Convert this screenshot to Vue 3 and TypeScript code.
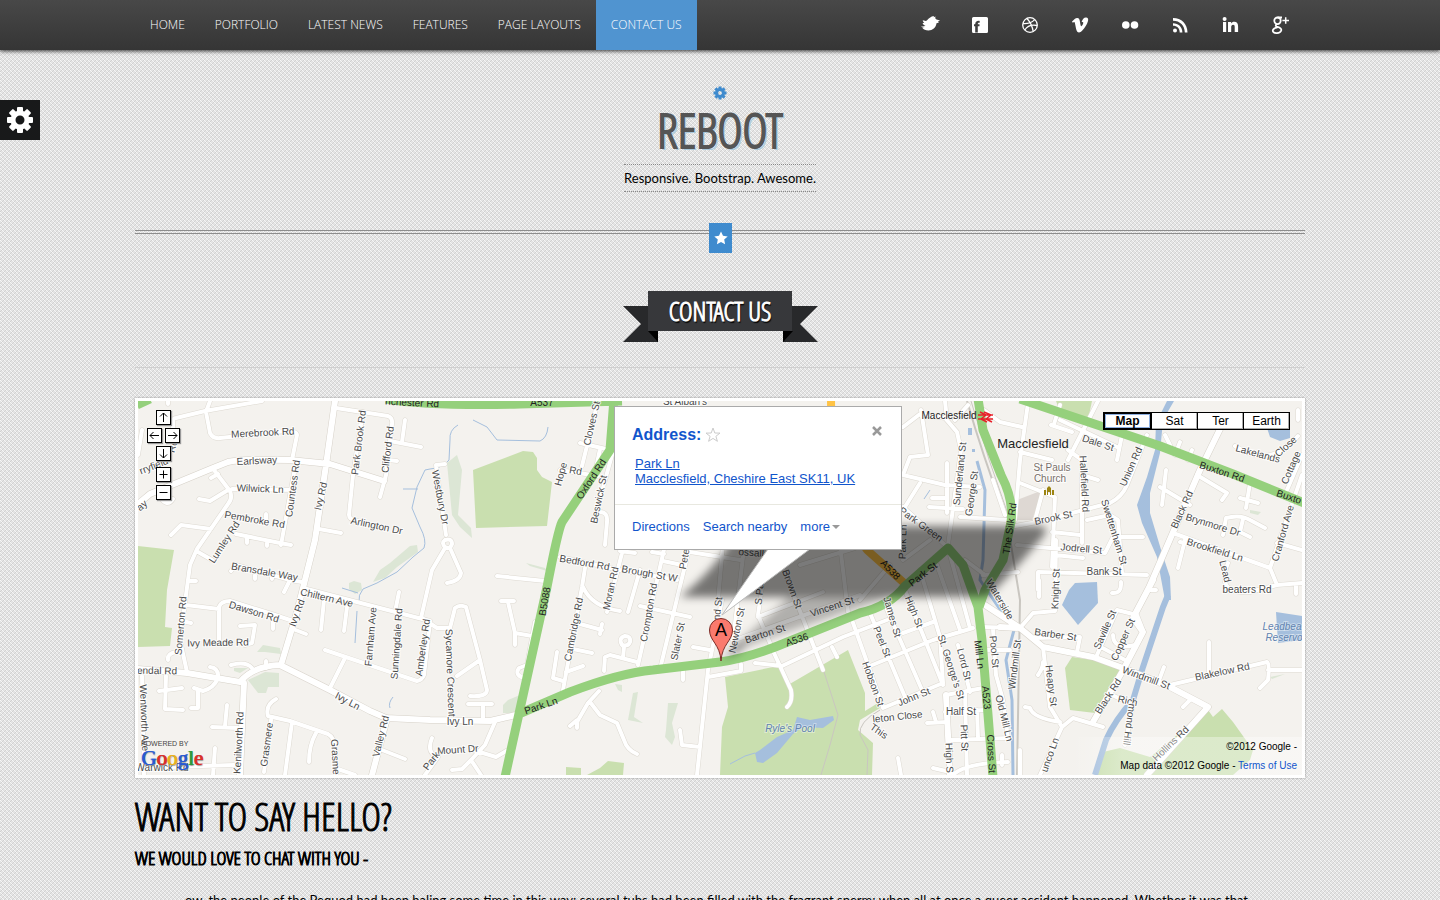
<script setup lang="ts">
interface Label {
  t: string
  x: number
  y: number
  r: number
}

const nav = ['Home', 'Portfolio', 'Latest News', 'Features', 'Page Layouts', 'Contact Us']
const mapTypes = ['Map', 'Sat', 'Ter', 'Earth']

const social = [
  { name: 'Twitter', d: 'M1 11.500c2 .3 3.500 0 4.500-.7C3.500 10 2.800 9 2.600 8l1.700-.1C3.200 7 2.800 6 2.800 5.200L6 6C7 5.500 8 4 9.500 3 11 1.800 12.500 1 14 1l-.4 1.200L15.500 1.500l-.3 1.800 1.300 1.200 3.700 1-2.400 1.200 1.200.8-2.500.8C16 12.500 12.500 15.500 8.500 15.500c-3 0-5-1-6-2.500l2.500-.2C3.200 12.800 1.800 12.400 1 11.500z' },
  { name: 'Facebook', d: 'M3.500 2h13A1.500 1.500 0 0 1 18 3.500v13a1.500 1.500 0 0 1-1.500 1.500h-13A1.500 1.500 0 0 1 2 16.500v-13A1.500 1.500 0 0 1 3.500 2zM5.200 17.500h2.600v-6.300h1.700V9.300H7.800c0-1.200.3-1.700 1.900-1.500V5.900C6.700 5.500 5.200 6.800 5.200 9.300H4v1.900h1.200z' },
  { name: 'Dribbble', d: '' },
  { name: 'Vimeo', d: 'M2 6.500C4 4.500 5.500 3.200 7 3c2-.2 2.600 1.300 3 4 .5 3 .8 4.300 1.300 4.300.6 0 2-2.300 2-3.500 0-1-.8-1-1.700-.7C12.500 4 14 2.300 16.200 2.500c3 .2 2 3.800.8 6.300-2 4-5.500 8.700-8 8.700-2.300 0-2.800-3-3.500-6.500C5 8.500 4.800 7 4.200 7c-.4 0-.8.300-1.400.7z' },
  { name: 'Flickr', d: 'M5.800 6.200a3.800 3.800 0 1 1 0 7.600 3.800 3.800 0 0 1 0-7.600zM14.500 6.200a3.800 3.800 0 1 1 0 7.600 3.800 3.800 0 0 1 0-7.600z' },
  { name: 'RSS', d: 'M5 13.500a2 2 0 1 1 0 4 2 2 0 0 1 0-4zM3 8.200v2.600c4 0 6.700 2.700 6.700 6.700h2.700C12.400 12 8.500 8.200 3 8.200zM3 3v2.700c7 0 11.800 4.800 11.800 11.800h2.700C17.500 9 11.500 3 3 3z' },
  { name: 'LinkedIn', d: 'M3 7h3.200v10H3zM4.600 2a2 2 0 1 1 0 4 2 2 0 0 1 0-4zM8 7h3.100v1.400c.7-1.100 1.700-1.700 3.100-1.700 2.800 0 3.900 1.600 3.900 4.700V17h-3.400v-5c0-1.500-.4-2.300-1.600-2.300-1.300 0-1.900.9-1.900 2.400V17H8z' },
  { name: 'Google Plus', d: '' },
]

const parks = [
  '138,546 174,550 167,590 165,627 172,628 170,646 138,647',
  '473,470 523,451 533,452 537,458 537,470 542,477 552,482 547,526 476,528',
  '725,677 773,667 780,668 788,685 848,650 865,693 865,711 878,703 880,708 860,720 858,730 873,743 872,775 720,775 722,727 728,707',
  '566,767 581,768 581,775 566,775',
  '587,775 600,768 608,761 624,763 623,775',
  '1056,401 1092,401 1088,420 1060,412',
  '1065,668 1072,657 1093,660 1120,670 1095,713 1070,710',
  '1103,752 1120,748 1150,757 1187,727 1208,710 1213,717 1222,709 1233,722 1253,750 1250,760 1233,775 1095,775',
]
const woods = [
  '380,570 390,563 410,546 417,545 418,552 397,567 385,578 373,582',
  '349,583 354,581 361,583 362,590 355,594 349,589',
  '257,652 263,645 280,648 281,654 265,652',
  '234,668 248,668 240,673 234,671',
  '248,680 265,672 279,673 279,687 268,687 266,693 258,693',
  '447,463 457,455 462,470 458,515 471,528 472,538 460,527 452,515',
  '503,705 508,700 520,695 520,713 503,713',
  '668,703 678,703 672,723 675,737 672,745 665,737 666,730',
  '633,693 638,692 634,717 643,723 628,720',
  '615,684 622,685 622,692 618,690',
  '526,563 545,568 547,571 530,566',
  '1270,677 1285,674 1272,679',
  '1250,510 1261,512 1258,515 1250,513',
]
const waters = [
  '755,753 760,750 777,737 793,730 797,717 810,720 833,716 834,720 823,728 803,727 793,734 777,753 763,763 757,762',
  '1167,401 1174,401 1163,420 1160,453 1150,493 1150,513 1162,553 1170,577 1171,600 1165,600 1157,557 1142,523 1137,505 1147,477 1155,450 1156,423',
  '1267,428 1290,428 1290,438 1280,441 1270,437',
  '1069,590 1075,583 1097,582 1098,603 1078,625 1062,605',
  '1276,612 1302,616 1302,640 1278,643',
  '968,428 972,428 972,435 968,435',
  '972,449 975,449 975,452 972,452',
]

const minor = `
M173,430 V420 Q174,418 176,418 L205,411 L262,401 M210,401 L206,412 L210,433 Q213,439 220,438 L286,431 Q297,431 297,435 L292,460
M336,408 L388,416 Q393,418 392,424 L386,475 L380,497 M405,420 L402,442 M390,441 L421,447 M388,460 L397,461
M363,412 L353,475 L349,515 Q349,520 358,521 M232,489 L292,490 M214,470 L230,491 Q233,498 228,504 L197,549 L190,565 L180,640 L187,672
M228,490 L210,501 L199,499 M218,474 L211,478 M211,529 L181,525 L171,535 M296,462 L281,545 M236,534 L280,543 L291,545 M247,537 V543 M267,541 V546 M266,514 V522
M198,552 L212,560 M319,529 L341,533 M189,581 H196 M284,592 L290,580 L302,582 M231,571 L236,565 L290,580 M255,575 V579 M272,575 V579 M160,497 Q167,508 173,499
M303,588 L430,621 M324,600 L321,630 M347,607 L344,631 M399,592 L396,607 M325,650 L417,681 Q422,680 424,675 L430,622
M345,658 L330,688 M138,455 L142,430 M168,401 V404
M186,605 L219,609 M219,640 L219,607 Q221,601 230,601 L275,615 L293,621 M240,626 L255,625 L252,643 L245,645 M273,618 V629 M293,629 L306,634 M182,621 L191,623
M168,660 Q167,653 177,652 M210,667 Q219,668 218,678 Q214,688 203,691 L194,688 M198,690 L198,708 L191,708 M231,665 Q246,661 252,668 M266,661 V668
M166,676 L165,709 L183,710 M159,691 L182,688 M212,727 L238,728 M227,705 L225,726
M276,699 Q265,705 268,716 L290,721 L328,734 Q336,738 335,755 L336,775 M292,722 L285,775 M316,733 Q309,745 309,762 M271,720 L264,772
M382,750 L405,759 M142,676 L144,775 M138,768 L234,765 M215,748 L213,775 M335,768 L355,775
M445,464 L436,465 L437,473 L446,535 M445,548 L432,570 L421,618 M450,548 L461,573 Q460,581 447,583
M598,401 L582,466 M580,443 L606,449 M600,449 L594,478 M560,470 L598,476 M614,448 L594,520 M600,512 Q608,512 607,522 L605,545
M560,557 L620,570 L677,580 M622,553 L607,612 M620,551 L635,553 M585,568 L582,587 L563,690 M583,587 Q592,607 620,611 M497,576 L545,581
M640,570 L628,612 M665,545 L638,665 M690,545 L661,665 M652,552 L664,554 M663,561 L682,565
M501,601 H514 M508,602 L515,633 L532,636 M515,633 V645 M535,622 L527,665 L519,668 Q514,675 524,678
M422,618 L437,628 L450,628 L455,608 Q460,604 466,607 L480,660 L487,690 Q487,697 470,696 M480,660 L457,676 M468,704 H492 M483,704 V721
M495,722 L485,745 L471,760 L481,775 M471,760 L462,769 L452,770 M473,750 L496,757 L508,750 M432,738 Q427,750 434,755 M438,757 L425,775
M580,624 L602,630 M602,624 L600,634 M573,649 L592,653 M566,672 L583,666 M557,652 L553,678 L563,681
M604,671 L605,657 L610,655 L637,662 M624,647 L623,658 M640,606 L690,617 M693,647 L710,650 M683,671 V680
M599,691 L588,703 L577,722 V728 M577,720 L570,726 M590,702 L600,715 L617,723 L624,740 Q627,750 637,754
M722,600 L708,670 L697,775 M680,730 L682,745 L700,747 M708,677 L741,671 V664 M745,540 L733,640 M690,552 L740,560 M723,545 L718,600
M780,560 L823,670 M758,617 L823,592 M768,545 L758,615 L773,650 M735,640 L860,595 M852,620 L883,707 M870,613 L905,697 M885,605 L922,690 M905,590 L943,685
M920,570 L940,637 M937,565 L960,630 M950,555 L970,628 M840,545 L848,612 M800,565 L855,548 M860,600 L890,565 M755,663 L782,666 L843,637 L887,620 M865,668 L933,640 L973,628 M903,633 L933,622 M883,708 L943,683
M774,653 L791,690 Q793,702 787,707 M832,647 L837,657 M940,637 L943,683 M946,695 L983,688 M958,645 L970,692 M927,723 L948,722 M933,712 L936,722 M950,740 L1010,738 M945,712 L985,710
M965,693 L967,775 M953,775 Q965,763 1008,762 M898,758 L901,775 M933,768 L950,772 M977,710 L978,738 M982,627 L1020,628 M993,629 L996,675 L1003,700 L1008,738 M985,650 H1000
M903,427 L920,414 L945,418 L957,432 L961,450 L948,545 M945,401 L947,420 M955,420 L968,405 M921,410 L928,455 L910,457 L903,475 L945,485 L980,487 M920,483 L903,510 M947,463 V513 M932,498 H945 M929,507 L963,509 M960,517 L1007,520 M903,507 L945,545
M984,410 L1000,422 L1022,427 M993,480 L1005,515 M903,560 L930,540 M983,575 L1018,572 M965,560 L985,575
M1028,403 L1020,460 L1015,520 M1020,483 L1055,497 L1052,567 M1052,460 L1020,452 M1098,401 L1068,460 M1068,450 L1082,460 V543 M1051,425 L1072,432 M1060,405 L1054,424 M1043,490 L1035,520
M1010,527 L1037,522 L1072,513 L1110,503 Q1122,497 1127,485 L1147,435 M1082,475 L1098,480 M1052,532 L1080,535 M1017,545 L1105,553 L1113,537 H1143 M1087,520 L1110,515 L1118,520 L1122,573
M1038,572 L1147,575 M1038,572 V590 M1055,555 L1083,558 M1060,420 L1117,447 M1125,420 L1117,460
M1166,470 L1162,505 M1160,487 L1190,505 M1165,435 L1170,445 M1180,442 L1175,455 M1192,450 L1188,460 M1197,475 L1227,493 L1222,500 M1250,483 L1246,508 M1240,498 L1258,503 M1223,535 L1226,518 Q1240,514 1250,520 L1265,528 M1243,519 L1240,532 L1250,537
M1173,533 L1270,568 L1302,475 M1270,568 L1277,585 L1302,583 M1277,543 L1302,550 M1185,540 L1178,568 M1180,542 L1195,545 M1287,490 L1302,455 M1235,446 Q1270,470 1298,436 M1228,563 Q1215,595 1250,592 L1277,585 M1296,585 V594 M1298,410 V420
M1020,628 L1033,613 L1055,611 L1056,540 M1039,580 V597 M1097,655 L1117,610 L1137,615 L1143,630 M1113,635 Q1113,650 1135,645 M1097,645 L1125,660 M1033,638 L1080,637 L1077,652 M1112,593 Q1122,594 1121,582
M1170,685 L1267,662 Q1270,664 1268,680 L1260,688 M1268,670 H1302 M1209,642 V672 M1164,667 L1158,683 M1190,700 L1183,707
M1043,647 L1050,707 L1062,727 L1040,775 M1025,707 L1030,708 Q1033,718 1060,722 M1062,727 L1073,718 L1103,727 M1112,695 L1133,705 L1125,745 M1043,662 Q1043,668 1038,675 M1150,590 H1156 M1000,650 H1010 M1002,765 V755 M1020,750 V775
M445,540 Q452,538 452,544 Q450,550 445,547 Q441,543 445,540 M625,636 Q631,636 630,642 Q628,647 622,645 Q618,638 625,636`

const major = `
M138,504 L150,494 L213,468 L228,462 Q240,459 290,460 L330,464 L384,481
M335,401 L326,465 L315,540 L303,588 L297,612 L281,665
M138,669 L187,673 L240,682 Q253,666 280,665 L330,690 L370,711 L386,718 L430,720 L490,721 L520,714 M244,683 L240,775 M387,718 L372,775
M1222,425 L1200,470 L1148,590 M1153,580 L1133,618 L1143,632 L1122,672 L1093,722
M1000,627 L1020,628 L1043,647 L1093,657 L1123,668 L1170,687 L1208,707 L1147,775 M985,605 L1020,628 M946,695 L950,775`

const labels: Label[] = [
  ['Merebrook Rd', 263, 436, -3], ['Earlsway', 257, 464, -3], ['Wilwick Ln', 260, 492, 2], ['Countess Rd', 296, 489, -82],
  ['Ivy Rd', 324, 497, -77], ['Park Brook Rd', 362, 443, -83], ['Clifford Rd', 391, 450, -83], ['Arlington Dr', 376, 529, 12],
  ['Pembroke Rd', 254, 523, 10], ['Lumley Rd', 227, 544, -57], ['Bransdale Way', 264, 575, 10], ['rryfield', 155, 469, -22],
  ['Rd', 176, 447, -75], ['ay', 144, 508, -40], ['Somerton Rd', 184, 626, -85], ['Dawson Rd', 253, 615, 17], ['Ivy Rd', 300, 614, -70],
  ['Ivy Meade Rd', 218, 646, -1], ['endal Rd', 157, 674, 1], ['Wentworth Ave', 141, 718, 88], ['Kenilworth Rd', 242, 743, -87],
  ['Grasmere', 270, 745, -82], ['Grasme', 332, 757, 87], ['Ivy Ln', 346, 704, 28], ['Valley Rd', 384, 737, -76],
  ['Warwick Rd', 162, 771, 0], ['Chiltern Ave', 326, 601, 13], ['Farnham Ave', 374, 637, -85], ['Sunningdale Rd', 400, 644, -86],
  ['Amberley Rd', 426, 648, -82], ['Sycamore Crescent', 447, 673, 88], ['Ivy Ln', 460, 725, 0], ['Mount Dr', 458, 753, -4],
  ['Park', 434, 763, -52], ['Westbury Dr', 437, 498, 79], ['Clowes St', 595, 424, -77], ['Hope', 564, 475, -75], ['Rd', 575, 474, 10],
  ['Beswick St', 602, 500, -78], ['Bedford Rd', 584, 566, 10], ['Brough St W', 649, 577, 10], ['Moran Rd', 614, 589, -78],
  ['Crompton Rd', 652, 613, -80], ['Cambridge Rd', 577, 630, -79], ['Slater St', 681, 642, -79], ['Peter St', 689, 552, -80],
  ['nd St', 721, 609, -84], ['Newton St', 740, 631, -78], ['S Park', 763, 590, -84], ['Brown St', 789, 590, 70],
  ['Vincent St', 833, 610, -18], ['Barton St', 766, 637, -18], ['Peel St', 879, 643, 68], ['Hobson St', 870, 685, 70],
  ['James St', 889, 618, 74], ['High St', 911, 613, 68], ["St. George's St", 948, 668, 72], ['Lord St', 961, 665, 76],
  ['Pool St', 991, 652, 85], ['John St', 915, 700, -22], ['Half St', 961, 715, 0], ['Pitt St', 961, 738, 88], ['High S', 946, 758, 88],
  ['Old Mill Ln', 1001, 719, 76], ['leton Close', 898, 720, -6], ['This', 877, 734, 35], ['Sunderland St', 963, 474, -84],
  ['George St', 975, 494, -82], ['Park Green', 919, 527, 36], ['Park Ln', 906, 542, -88], ['Waterside', 997, 601, 60],
  ['Hallefield Rd', 1081, 484, 87], ['Union Rd', 1134, 468, -66], ['Dale St', 1097, 446, 18], ['Brook St', 1054, 521, -12],
  ['Swettenham St', 1111, 533, 73], ['Jodrell St', 1081, 552, 5], ['Bank St', 1104, 575, 0], ['Knight St', 1059, 589, -88],
  ['Barber St', 1055, 638, 8], ['Black Rd', 1185, 511, -66], ['Lakelands', 1257, 457, 15], ['Close', 1288, 449, -42],
  ['Cottage', 1294, 469, -66], ['Brynmore Dr', 1212, 528, 17], ['Brookfield Ln', 1214, 553, 17], ['Cranford Ave', 1286, 534, -74],
  ['Lead', 1222, 572, 76], ['beaters Rd', 1247, 593, 0], ['Saville St', 1108, 631, -66], ['Copper St', 1126, 641, -66],
  ['Windmill St', 1145, 681, 20], ['Blakelow Rd', 1223, 675, -12], ['Black Rd', 1111, 698, -57], ['Heapy St', 1048, 686, 83],
  ['Windmill St', 1018, 665, -83], ['Rich', 1127, 704, 12], ['mond Hill', 1126, 724, 98], ['Hollins Rd', 1173, 746, -44],
  ['unco Ln', 1053, 756, -70], ["St Alban's", 685, 405, 0], ['ossall', 751, 556, 4],
].map(([t, x, y, r]) => ({ t, x, y, r }) as Label)

const strong: Label[] = [
  { t: 'A537', x: 542, y: 406, r: 0 }, { t: 'nchester Rd', x: 412, y: 406, r: 3 },
  { t: 'Oxford Rd', x: 594, y: 481, r: -57 }, { t: 'B5088', x: 548, y: 602, r: -80 },
  { t: 'Park Ln', x: 542, y: 709, r: -19 }, { t: 'A536', x: 798, y: 643, r: -18 },
  { t: 'Park St', x: 925, y: 577, r: -38 }, { t: 'A538', x: 888, y: 572, r: 46 },
  { t: 'The Silk Rd', x: 1013, y: 529, r: -82 }, { t: 'Mill Ln', x: 976, y: 655, r: 83 },
  { t: 'A523', x: 983, y: 698, r: 85 }, { t: 'Cross St', x: 988, y: 754, r: 87 },
  { t: 'Buxton Rd', x: 1221, y: 475, r: 18 }, { t: 'Buxto', x: 1288, y: 500, r: 18 },
]
</script>

<template>
  <div class="page">
    <header class="bar">
      <div class="wrap bar-in">
        <nav class="nav">
          <a v-for="n in nav" :key="n" href="#" :class="{ on: n === 'Contact Us' }">{{ n }}</a>
        </nav>
        <div class="social">
          <a v-for="s in social" :key="s.name" href="#" :aria-label="s.name">
            <svg viewBox="0 0 20 20" width="20" height="20">
              <g v-if="s.name === 'Dribbble'" fill="none" stroke="#fff" stroke-width="1.300">
                <circle cx="10" cy="10" r="7.300" />
                <path d="M7 3.500Q12 9 13.200 16.500M3 8.600Q10.500 9 14.800 4.600M4.800 15Q8.500 8.800 17.200 10.500" />
              </g>
              <g v-else-if="s.name === 'Google Plus'" fill="none" stroke="#fff" stroke-width="1.800">
                <ellipse cx="7.500" cy="5.800" rx="3.200" ry="3.300" />
                <path d="M7.500 2.500h4.500M7.500 9Q4.500 10.300 6.500 11.600Q11.800 12.800 11.300 15.300Q10.300 18.300 6.500 18.100Q2.500 17.800 2.800 15.300Q3.600 12.900 7.500 12.400" />
                <path d="M15.700 2.200v6.600M12.400 5.500h6.600" stroke-width="1.500" />
              </g>
              <path v-else :d="s.d" fill="#fff" fill-rule="evenodd" />
            </svg>
          </a>
        </div>
      </div>
    </header>

    <button class="settings" type="button" aria-label="Settings">
      <svg viewBox="-14 -14 28 28" width="28" height="28">
        <g fill="#fff">
          <rect v-for="a in 8" :key="a" x="-3" y="-13" width="6" height="8" rx="1" :transform="`rotate(${a * 45})`" />
        </g>
        <circle r="7" fill="none" stroke="#fff" stroke-width="5" />
      </svg>
    </button>

    <main class="wrap">
      <section class="brand">
        <svg class="cog" viewBox="-7 -7 14 14" width="14" height="14">
          <g fill="#3f8bce">
            <rect v-for="a in 8" :key="a" x="-1.500" y="-6.500" width="3" height="4" :transform="`rotate(${a * 45})`" />
          </g>
          <circle r="3.400" fill="none" stroke="#3f8bce" stroke-width="3" />
        </svg>
        <h1>REBOOT</h1>
        <p class="tag">Responsive. Bootstrap. Awesome.</p>
      </section>

      <div class="rule">
        <span class="badge">
          <svg viewBox="0 0 14 14" width="14" height="14"><path fill="#fff" d="M7 .500l2 4.300 4.700.6-3.500 3.200.9 4.700L7 11l-4.100 2.300.9-4.700L.3 5.400 5 4.800z" /></svg>
        </span>
      </div>

      <div class="title-row">
        <div class="ribbon">
          <svg class="tails" viewBox="0 0 195 51" width="195" height="51">
            <path fill="#28292b" d="M0 15h35v36H0l18-18zM195 15h-35v36h35l-18-18z" />
            <path fill="#000" d="M25 40h10v11zM170 40h-10v11z" />
          </svg>
          <h2>CONTACT US</h2>
        </div>
      </div>

      <section class="frame">
        <div class="map">
          <svg class="canvas" viewBox="138 401 1164 374" preserveAspectRatio="xMidYMid slice" role="img" aria-label="Street map of Macclesfield">
            <defs>
              <filter id="soft" x="-20%" y="-40%" width="140%" height="180%"><feGaussianBlur stdDeviation="4" /></filter>
            </defs>
            <rect x="138" y="401" width="1164" height="374" fill="#f4f2ee" />
            <polygon v-for="p in parks" :key="p" :points="p" fill="#c9dfaf" />
            <polygon v-for="p in woods" :key="p" :points="p" fill="#dce6d5" />
            <polygon points="1017,500 1043,490 1032,520 1017,520" fill="#ded8d3" />
            <polygon v-for="p in waters" :key="p" :points="p" fill="#a5bfdd" />
            <g fill="none" stroke="#a5bfdd">
              <path d="M430,469 L425,470 L417,487 L412,508 L420,527 Q427,540 424,548 L413,557 L397,572 L377,583 L363,589 Q358,595 359,602 M357,611 L355,643 M403,489 H418 M342,588 L358,593 M458,425 Q449,430 450,440 L449,460 Q443,468 430,469 M473,420 L487,427 L497,440 L540,441 Q547,438 548,427 M755,753 L745,756 L730,764 M924,499 L930,490 M393,697 Q388,703 390,708" />
              <path stroke-width="3" d="M977,461 L985,490 L983,560 L980,580 L1014,630 L1006,660 L1012,700 L1013,775" />
              <path stroke-width="6" d="M1168,595 L1163,607 L1143,667 L1133,700 Q1115,720 1106,740 L1095,775" />
            </g>
            <g fill="none" stroke="#c9c6c0">
              <path stroke-width="2" d="M967,401 Q984,460 1007,520 L1020,600 L1017,775" />
              <path d="M971,401 Q988,460 1010,520 M824,672 L838,715 L830,745 L821,775 M880,710 Q858,722 860,735 L868,750 L867,775" />
            </g>
            <g fill="none" stroke-linecap="round" stroke-linejoin="round">
              <path :d="minor" stroke="#ddd9d1" stroke-width="5" />
              <path :d="major" stroke="#d6d1c8" stroke-width="7" />
              <path :d="minor" stroke="#fff" stroke-width="4" />
              <path :d="major" stroke="#fff" stroke-width="6" />
              <path d="M831,398 L832,500 L867,550 L903,582" stroke="#ffc345" stroke-width="8" />
              <g stroke="#95d07c" stroke-width="9" stroke-linecap="butt">
                <path d="M137,405 L150,399 M386,399 Q430,406 520,404 L622,401 M614,399 L610,450 L562,522 Q558,530 547,587 L505,777" />
                <path d="M521,713 L570,692 Q620,673 653,670 L720,662 Q750,658 790,641 L860,613 Q890,606 905,586 L948,548 L963,565 L978,607 L982,640 L993,777" />
                <path d="M978,399 L983,430 L1001,475 Q1014,500 1011,522 L1003,560 L985,590 L979,607" />
                <path d="M1020,399 L1160,446 L1233,474 L1304,503" />
              </g>
            </g>
            <g class="lab">
              <text v-for="(l, i) in labels" :key="i" :transform="`translate(${l.x} ${l.y}) rotate(${l.r})`">{{ l.t }}</text>
            </g>
            <g class="lab strong">
              <text v-for="(l, i) in strong" :key="i" :transform="`translate(${l.x} ${l.y}) rotate(${l.r})`">{{ l.t }}</text>
              <text x="949" y="419">Macclesfield</text>
              <text class="town" x="1033" y="448">Macclesfield</text>
            </g>
            <g class="lab poi">
              <text x="1052" y="471">St Pauls</text>
              <text x="1050" y="482">Church</text>
            </g>
            <path d="M1044 495v-5h2v5zM1047 495v-7l2-2 2 2v7h-1v-3h-2v3zM1052 495v-5h2v5z" fill="#9c8412" />
            <g class="lab lake">
              <text x="790" y="732">Ryle's Pool</text>
              <text x="1282" y="630">Leadbea</text>
              <text x="1284" y="641">Reservo</text>
            </g>
            <path d="M978 415h15M978 419h15M980 412l6 3-5 4 6 3M984 412l7 3-5 4 6 3" fill="none" stroke="#e8202a" stroke-width="1.500" />
            <g filter="url(#soft)">
              <path d="M680 597Q715 570 738 530Q750 526 800 526H1040Q1052 528 1040 540Q1015 570 988 597Z" fill="#000" fill-opacity=".52" />
              <path d="M790 597L890 597L728 652Z" fill="#000" fill-opacity=".28" />
              <path d="M722 660L735 645L748 640L740 652Z" fill="#000" fill-opacity=".35" />
            </g>
          </svg>

          <div class="controls">
            <button type="button" aria-label="Pan up"><svg viewBox="0 0 13 13"><path d="M6.500 11V2M3 5.500l3.500-3.500L10 5.500" /></svg></button>
            <div class="pair">
              <button type="button" aria-label="Pan left"><svg viewBox="0 0 13 13"><path d="M11 6.500H2M5.500 3L2 6.500 5.500 10" /></svg></button>
              <button type="button" aria-label="Pan right"><svg viewBox="0 0 13 13"><path d="M2 6.500h9M7.500 3L11 6.500 7.500 10" /></svg></button>
            </div>
            <button type="button" aria-label="Pan down"><svg viewBox="0 0 13 13"><path d="M6.500 2v9M3 7.500l3.500 3.500L10 7.500" /></svg></button>
            <button class="zoom" type="button" aria-label="Zoom in"><svg viewBox="0 0 13 13"><path d="M6.500 2.500v8M2.500 6.500h8" /></svg></button>
            <button type="button" aria-label="Zoom out"><svg viewBox="0 0 13 13"><path d="M2.500 6.500h8" /></svg></button>
          </div>

          <div class="types">
            <button v-for="m in mapTypes" :key="m" type="button" :class="{ on: m === 'Map' }">{{ m }}</button>
          </div>

          <svg class="pin" viewBox="0 0 110 120" width="110" height="120">
            <path d="M61 1L15 67L103 1Z" fill="#fff" />
            <path d="M61 1L15 67L103 1" fill="none" stroke="#bbb" stroke-width="1" />
            <path d="M14 113C13 96 2.500 93 2.500 82a11.500 11.500 0 0 1 23 0C25.500 93 15 96 14 113z" fill="#fa7a6e" stroke="#7a2c27" />
            <text x="14" y="88">A</text>
          </svg>

          <article class="info">
            <div class="info-top">
              <button class="close" type="button" aria-label="Close">
                <svg viewBox="0 0 10 10" width="10" height="10"><path d="M1 1l8 8M9 1L1 9" stroke="#999" stroke-width="2.500" /></svg>
              </button>
              <h3>Address:
                <svg viewBox="0 0 16 16" width="16" height="16"><path d="M8 1l1.800 5 5.200.1-4.100 3.200 1.500 5L8 11.400l-4.400 2.900 1.500-5L1 6.100 6.200 6z" fill="#fff" stroke="#ccc" /></svg>
              </h3>
              <a class="addr" href="#">Park Ln<br />Macclesfield, Cheshire East SK11, UK</a>
            </div>
            <div class="info-links">
              <a href="#">Directions</a><a href="#">Search nearby</a><a href="#" class="more">more</a>
            </div>
          </article>

          <div class="powered">
            <span>POWERED BY</span>
            <b><i class="bl">G</i><i class="re">o</i><i class="ye">o</i><i class="bl">g</i><i class="gr">l</i><i class="re">e</i></b>
          </div>
          <div class="copy">
            <p>©2012 Google -</p>
            <p>Map data ©2012 Google - <a href="#">Terms of Use</a></p>
          </div>
        </div>
      </section>

      <section class="hello">
        <h2>WANT TO SAY HELLO?</h2>
        <h3>WE WOULD LOVE TO CHAT WITH YOU -</h3>
        <p>ow, the people of the Pequod had been haling some time in this way; several tubs had been filled with the fragrant sperm; when all at once a queer accident happened. Whether it was that</p>
      </section>
    </main>
  </div>
</template>

<style>
body {
  margin: 0;
  background-color: #e4e4e4;
  background-image:
    repeating-conic-gradient(rgba(200, 200, 200, .3) 0 25%, rgba(255, 255, 255, .3) 0 50%),
    repeating-conic-gradient(#d4d4d4 0 25%, #f2f2f2 0 50%);
  background-size: 4px 4px, 2px 2px;
}
</style>

<style scoped>
.page {
  height: 100vh;
  overflow: hidden;
  font: 13px/18px Lato, "Open Sans", sans-serif;
  color: #000;
}
h1, h2, h3, p { margin: 0; font-weight: 400; }
a { text-decoration: none; color: inherit; }
button { padding: 0; border: 0; font: inherit; cursor: pointer; }
svg { display: block; }
.wrap { max-width: 1170px; margin: 0 auto; }
.bar {
  position: relative;
  height: 50px;
  background: linear-gradient(#484848, #353535);
  box-shadow: 0 1px 4px rgba(0, 0, 0, .8);
}
.bar-in { display: flex; justify-content: space-between; }
.nav { display: flex; }
.nav a {
  padding: 0 15px;
  font: 300 12px/50px "Open Sans", sans-serif;
  color: #fff;
  text-transform: uppercase;
}
.nav a.on { background: #5094d0; }
.social { display: flex; }
.social a { padding: 15px; }
.settings {
  position: absolute;
  left: 0;
  top: 100px;
  width: 40px;
  height: 40px;
  display: grid;
  place-items: center;
  background: #18191a;
}
.brand { display: flex; flex-direction: column; align-items: center; padding-top: 36px; }
h1, .ribbon h2, .hello h2, .hello h3 {
  font-family: "Open Sans Condensed Light", "Oswald", "Roboto Condensed", "Open Sans Condensed", "Liberation Sans Narrow", sans-serif;
  -webkit-text-stroke: 1px;
}
h1 {
  font-size: 48px;
  line-height: 60px;
  padding-bottom: 2px;
  color: #555;
  -webkit-text-stroke: 2px;
  text-shadow: 1px 1px 0 #fff, 2px 2px 0 #a9c9dc;
}
.tag {
  margin-top: 2px;
  border: 1px dotted #888;
  border-width: 1px 0;
  line-height: 26px;
}
.rule {
  position: relative;
  height: 2px;
  margin-top: 38px;
  border: 1px solid #8c8c8c;
  border-width: 1px 0;
}
.badge {
  position: absolute;
  left: 50%;
  top: -8px;
  width: 23px;
  height: 30px;
  margin-left: -11px;
  display: grid;
  place-items: center;
  background: #3f8bce;
}
.title-row {
  display: flex;
  justify-content: center;
  margin-top: 57px;
  padding-bottom: 36px;
  border-bottom: 1px solid #cfcfcf;
}
.ribbon { position: relative; width: 144px; }
.tails { position: absolute; left: -25px; top: 0; }
.ribbon h2 {
  position: relative;
  background: #37383b;
  color: #fff;
  font-size: 26px;
  line-height: 40px;
  text-align: center;
  text-shadow: 1px 2px 1px #000;
}
.frame {
  margin-top: 30px;
  padding: 3px;
  background: #fff;
  box-shadow: 0 0 2px rgba(0, 0, 0, .35);
}
.map {
  position: relative;
  height: 374px;
  overflow: hidden;
  font-family: "Liberation Sans", Arial, sans-serif;
}
.canvas { width: 100%; height: 100%; }
.lab text {
  font-size: 10px;
  text-anchor: middle;
  fill: #4a4a4a;
  stroke: #fff;
  stroke-opacity: .8;
  stroke-width: 2px;
  paint-order: stroke;
}
.strong text { fill: #222; stroke-opacity: 0; }
.strong text.town { font-size: 13px; }
.poi text { fill: #7a706a; }
.lake text { fill: #6183b0; font-style: italic; stroke-opacity: .4; }
.controls {
  position: absolute;
  left: 9px;
  top: 9px;
  display: flex;
  flex-direction: column;
  align-items: center;
  gap: 3px;
}
.pair { display: flex; gap: 3px; }
.controls button {
  width: 15px;
  height: 15px;
  border: 1px solid #000;
  background: #fff;
  box-shadow: 1px 1px 1px #999;
}
.controls .zoom { margin-top: 3px; }
.controls path { fill: none; stroke: #000; stroke-width: 1; }
.types { position: absolute; right: 12px; top: 11px; width: 187px; display: flex; }
.types button {
  flex: 1;
  height: 18px;
  border: 1px solid #000;
  border-left-width: 0;
  background: #fff;
  box-shadow: inset -1px -1px 0 #aaa;
  font-size: 12px;
  line-height: 16px;
}
.types .on { border-width: 2px; font-weight: 700; line-height: 14px; box-shadow: inset 0 0 0 1px #8fb0e0; }
.pin { position: absolute; left: 50%; top: 147px; margin-left: -13px; }
.pin text { font-size: 18px; text-anchor: middle; }
.info {
  position: absolute;
  left: 50%;
  top: 5px;
  width: 286px;
  height: 142px;
  margin-left: -106px;
  border: 1px solid #aaa;
  background: #fff;
  color: #1155cc;
  font-size: 13px;
  line-height: 15px;
}
.info-top { height: 97px; padding-left: 17px; border-bottom: 1px solid #e8e8e0; }
.close { position: absolute; right: 19px; top: 19px; background: none; }
.info h3 { display: flex; align-items: center; gap: 4px; padding-top: 18px; font-size: 16px; line-height: 20px; font-weight: 700; }
.addr { display: block; margin: 11px 0 0 3px; text-decoration: underline; }
.info-links { display: flex; gap: 13px; padding: 14px 17px; }
.more::after {
  content: "";
  display: inline-block;
  margin: 0 0 2px 2px;
  border: 4px solid transparent;
  border-top-color: #999;
  border-bottom: 0;
}
.powered { position: absolute; left: 3px; bottom: 7px; }
.powered span { display: block; font-size: 7px; line-height: 8px; color: #444; }
.powered b { display: block; font: 21px/20px "Liberation Serif", serif; }
.powered i { font-style: normal; text-shadow: 1px 0 0 currentColor, 1px 1px 1px #999; }
.bl { color: #2a5bd0; }
.re { color: #d8302c; }
.ye { color: #e8b020; }
.gr { color: #2e9a3c; }
.copy {
  position: absolute;
  right: 0;
  bottom: 0;
  padding: 0 5px 0 48px;
  background: linear-gradient(90deg, rgba(255, 255, 255, 0), rgba(255, 255, 255, .35) 50px);
  font-size: 10px;
  line-height: 19px;
  text-align: right;
}
.copy a { color: #1155cc; }
.hello h2 { margin-top: 18px; font-size: 38px; line-height: 40px; }
.hello h3 { margin-top: 12px; font-size: 19px; line-height: 20px; }
.hello p { margin-top: 23px; padding-left: 50px; }
</style>
